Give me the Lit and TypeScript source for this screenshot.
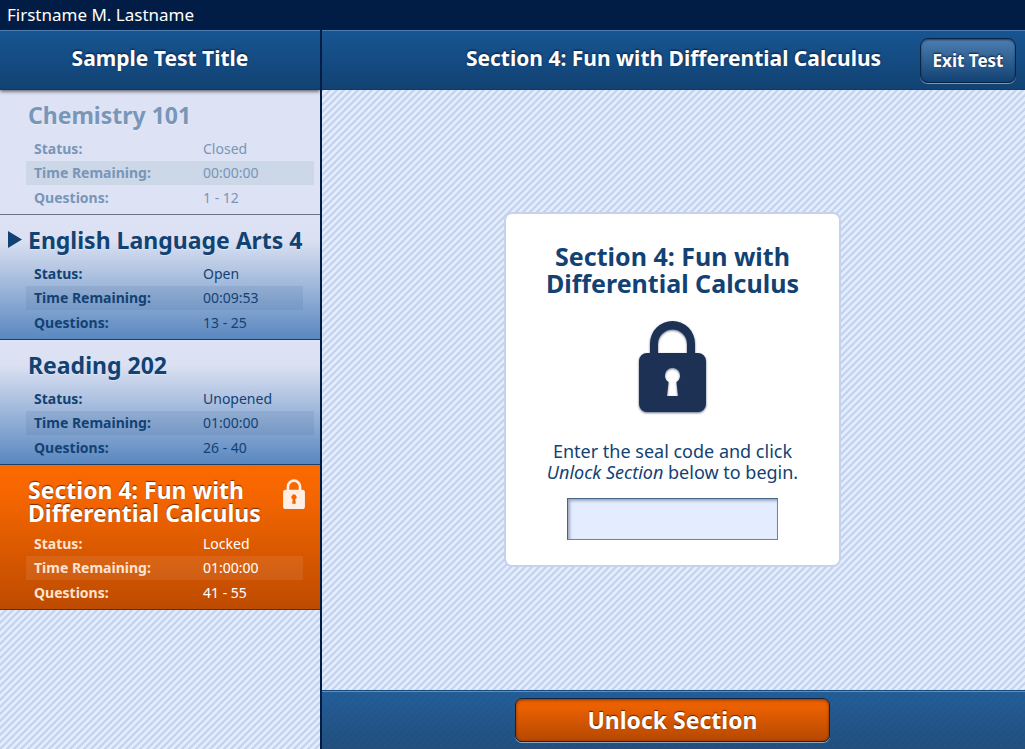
import { LitElement, html, css, svg } from "lit";
import { customElement, property } from "lit/decorators.js";

interface Section {
  title: string;
  status: string;
  time: string;
  questions: string;
  state: "closed" | "open" | "locked";
  current?: boolean;
  marked?: boolean;
}

const SECTIONS: Section[] = [
  { title: "Chemistry 101", status: "Closed", time: "00:00:00", questions: "1 - 12", state: "closed" },
  { title: "English Language Arts 4", status: "Open", time: "00:09:53", questions: "13 - 25", state: "open", marked: true },
  { title: "Reading 202", status: "Unopened", time: "01:00:00", questions: "26 - 40", state: "open" },
  { title: "Section 4: Fun with Differential Calculus", status: "Locked", time: "01:00:00", questions: "41 - 55", state: "locked", current: true },
];

const lockShape = svg`
  <path fill-rule="evenodd" d="M11 33V23.5a22.5 22.5 0 0 1 45 0V33h3a8 8 0 0 1 8 8v43a8 8 0 0 1-8 8H8a8 8 0 0 1-8-8V41a8 8 0 0 1 8-8zM19 33h29V24a14.5 14.5 0 0 0-29 0zM29.5 62L28 76h11L37.5 62a7.7 7.7 0 1 0-8 0z"/>`;

@customElement("section-card")
export class SectionCard extends LitElement {
  @property({ attribute: false }) section!: Section;

  static styles = css`
    :host { display: block; }
    .card {
      position: relative;
      padding: 14px 15px 3px 28px;
      border-bottom: 1px solid #1c3f6b;
      color: #124273;
      background: linear-gradient(#dde2f4, #dbe1f2 20%, #5987c0);
      text-shadow: 0 1px 1px rgba(255, 255, 255, 0.35);
    }
    .closed {
      color: #7896b7;
      background: #dde3f5;
      border-bottom-color: #6f7683;
    }
    .locked {
      color: #fff;
      background: linear-gradient(#fb6a00, #f66600 20%, #bd4b00);
      border-bottom-color: #6d2b00;
      text-shadow: 0 -1px 1px rgba(60, 20, 0, 0.7);
    }
    h2 {
      margin: 0;
      font-size: 23px;
      line-height: 23px;
      font-weight: 700;
    }
    .head { display: flex; justify-content: space-between; gap: 12px; }
    .icon { flex: none; width: 22px; height: 30px; fill: #ffefe4; }
    table {
      width: calc(100% + 11px);
      margin: 10px 0 0 -2px;
      border-collapse: collapse;
      font-size: 14px;
      line-height: 24px;
      text-shadow: none;
    }
    .marked table, .locked table { width: 100%; }
    .locked table { margin-top: 7px; }
    th, td { height: 24px; padding: 0 0 0 8px; text-align: left; font-weight: 400; }
    th { width: 161px; font-weight: 700; }
    tr:last-child > * { height: 26px; }
    .locked th { color: #ffe3d0; }
    .band { background: rgba(18, 66, 115, 0.09); }
    .closed .band { background: #ccd7e8; }
    .locked .band { background: rgba(255, 255, 255, 0.08); }
    .pointer {
      position: absolute;
      left: 8px;
      top: 16px;
      width: 14px;
      height: 17px;
      fill: #124273;
    }
  `;

  render() {
    const s = this.section;
    return html`
      <article class="card ${s.state} ${s.marked ? "marked" : ""}">
        ${s.marked ? html`<svg class="pointer" viewBox="0 0 14 17" aria-hidden="true"><path d="M0 0L14 8.5L0 17z"/></svg>` : ""}
        <div class="head">
          <h2>${s.title}</h2>
          ${s.state === "locked" ? html`<svg class="icon" viewBox="0 0 67 92" aria-hidden="true">${lockShape}</svg>` : ""}
        </div>
        <table>
          <tbody>
            <tr><th scope="row">Status:</th><td>${s.status}</td></tr>
            <tr class="band"><th scope="row">Time Remaining:</th><td>${s.time}</td></tr>
            <tr><th scope="row">Questions:</th><td>${s.questions}</td></tr>
          </tbody>
        </table>
      </article>
    `;
  }
}

@customElement("app-root")
export class AppRoot extends LitElement {
  static styles = css`
    :host {
      display: flex;
      flex-direction: column;
      min-height: 100vh;
      font-family: "Noto Sans", sans-serif;
      color: #124273;
      background: linear-gradient(135deg, #c5d4ec 10%, #e3edff 15% 35%, #c5d4ec 40% 60%, #e3edff 65% 85%, #c5d4ec 90%) 0 0 / 7px 7px;
    }
    .user {
      height: 30px;
      padding: 0 7px;
      background: #021d45;
      color: #fff;
      font-size: 17px;
      line-height: 30px;
    }
    .body { flex: 1; display: grid; grid-template-columns: 322px 1fr; }
    .side { border-right: 2px solid #021d45; display: flex; flex-direction: column; }
    .bar {
      height: 60px;
      box-sizing: border-box;
      display: grid;
      align-items: center;
      border-top: 1px solid #4b7db0;
      border-bottom: 1px solid #0e3a66;
      background: linear-gradient(#175592, #124273);
      color: #fff;
      text-align: center;
      text-shadow: 0 -1px 2px rgba(0, 15, 45, 0.8);
    }
    .side .bar { position: relative; box-shadow: 0 1px 4px rgba(0, 0, 0, 0.7); z-index: 1; clip-path: inset(0 0 -8px 0); }
    h1, .bar h2 { margin: 0; padding-bottom: 4px; font-size: 21px; line-height: 28px; font-weight: 700; }
    .main { display: flex; flex-direction: column; min-width: 0; }
    .main .bar { grid-template-columns: 105px 1fr 105px; }
    .bar h2 { grid-column: 2; }
    button {
      font: inherit;
      font-weight: 700;
      color: #fff;
      padding: 0;
      cursor: pointer;
    }
    .exit {
      justify-self: end;
      width: 96px;
      height: 45px;
      margin-right: 9px;
      border: 1px solid #0a2444;
      border-radius: 8px;
      font-size: 17px;
      background: linear-gradient(#4d7eb1, #124273);
      box-shadow: 0 1px 0 rgba(255, 255, 255, 0.45), inset 0 1px 2px rgba(0, 15, 45, 0.6);
      text-shadow: 0 -1px 2px rgba(0, 15, 45, 0.8);
    }
    .stage { flex: 1; display: grid; place-items: center; padding: 24px 26px 25px 24px; }
    .panel {
      box-sizing: border-box;
      width: 337px;
      padding: 29px 32px 25px;
      border: 2px solid #c5d3ec;
      border-radius: 8px;
      background: #fff;
      display: flex;
      flex-direction: column;
      align-items: center;
      text-align: center;
    }
    .panel h3 { margin: 0; font-size: 25px; line-height: 27px; }
    .lock { width: 67px; height: 92px; margin: 23px 0 29px; fill: #1d3155; filter: drop-shadow(0 1px 1px rgba(29, 49, 85, 0.7)); }
    label { font-size: 18px; line-height: 21px; }
    input {
      box-sizing: border-box;
      width: 211px;
      height: 42px;
      margin-top: 15px;
      padding: 0 10px;
      border: 1px solid #5f88b3;
      border-top-color: #456587;
      border-left-color: #456587;
      border-radius: 0;
      background: #e3edff;
      box-shadow: inset 2px 2px 3px rgba(0, 0, 50, 0.3);
      font: inherit;
      font-size: 18px;
      color: inherit;
    }
    .foot {
      height: 59px;
      box-sizing: border-box;
      display: grid;
      place-items: center;
      padding-right: 2px;
      border-top: 1px solid #15487b;
      box-shadow: inset 0 1px 0 #5d92c4;
      background: linear-gradient(rgba(20, 82, 143, 0.92), rgba(18, 66, 115, 0.92));
    }
    .unlock {
      width: 315px;
      height: 44px;
      border: 1px solid #14243c;
      border-radius: 7px;
      font-size: 23px;
      line-height: 40px;
      background: linear-gradient(#ee6200, #e96000 20%, #b54800);
      box-shadow: 0 1px 0 rgba(255, 255, 255, 0.5), inset 0 1px 3px rgba(90, 30, 0, 0.7);
      text-shadow: 0 -1px 1px rgba(60, 20, 0, 0.8);
    }
  `;

  render() {
    const current = SECTIONS.find((s) => s.current)!;
    return html`
      <div class="user">Firstname M. Lastname</div>
      <div class="body">
        <aside class="side">
          <header class="bar"><h1>Sample Test Title</h1></header>
          ${SECTIONS.map((s) => html`<section-card .section=${s}></section-card>`)}
        </aside>
        <main class="main">
          <header class="bar">
            <h2>${current.title}</h2>
            <button class="exit" type="button">Exit Test</button>
          </header>
          <div class="stage">
            <section class="panel">
              <h3>${current.title}</h3>
              <svg class="lock" viewBox="0 0 67 92" aria-hidden="true">${lockShape}</svg>
              <label for="code">Enter the seal code and click <em>Unlock Section</em> below to begin.</label>
              <input id="code" type="text" autocomplete="off" />
            </section>
          </div>
          <footer class="foot"><button class="unlock" type="button">Unlock Section</button></footer>
        </main>
      </div>
    `;
  }
}
